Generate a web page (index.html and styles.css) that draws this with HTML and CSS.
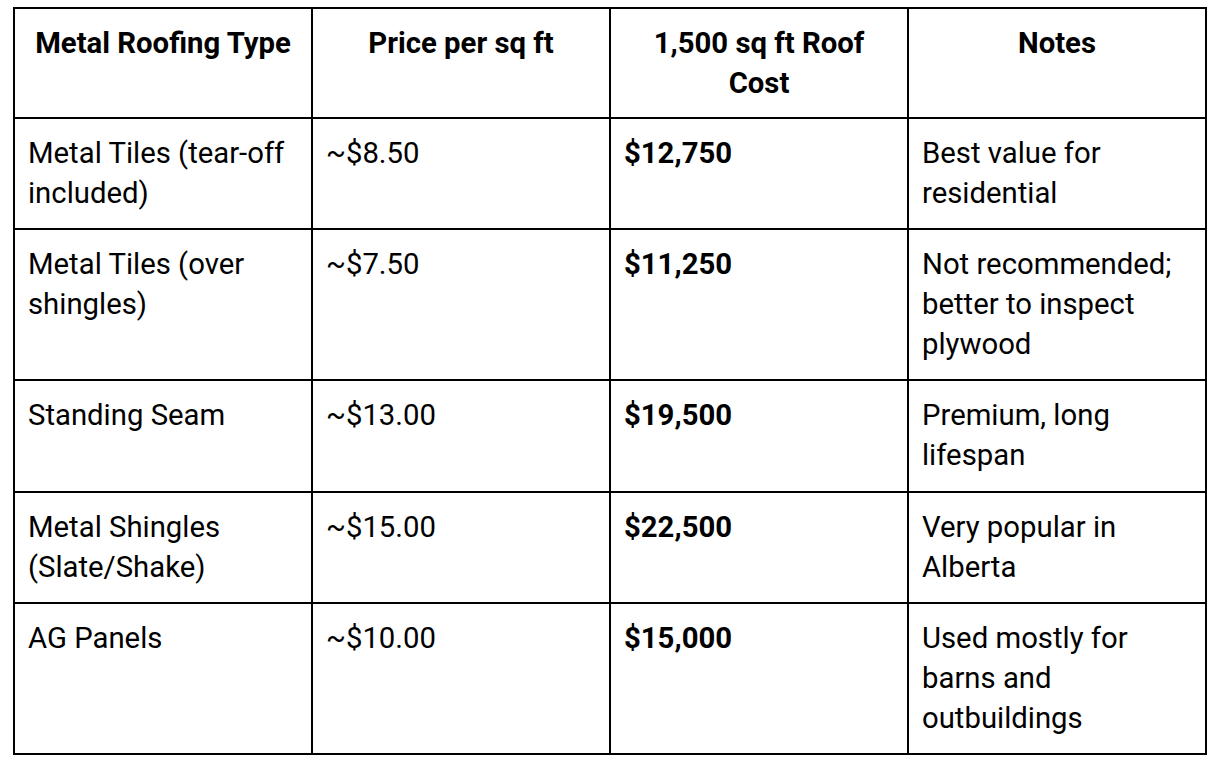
FILE: index.html
```html
<!DOCTYPE html>
<html>
<head>
<meta charset="utf-8">
<link rel="stylesheet" href="styles.css">
</head>
<body>
<table class="cost-table">
  <colgroup><col><col><col><col></colgroup>
  <thead>
    <tr><th>Metal Roofing Type</th><th>Price per sq ft</th><th>1,500 sq ft Roof Cost</th><th>Notes</th></tr>
  </thead>
  <tbody>
    <tr><td>Metal Tiles (tear-off included)</td><td>~$8.50</td><td><strong>$12,750</strong></td><td>Best value for residential</td></tr>
    <tr><td>Metal Tiles (over shingles)</td><td>~$7.50</td><td><strong>$11,250</strong></td><td>Not recommended; better to inspect plywood</td></tr>
    <tr><td>Standing Seam</td><td>~$13.00</td><td><strong>$19,500</strong></td><td>Premium, long lifespan</td></tr>
    <tr><td>Metal Shingles (Slate/Shake)</td><td>~$15.00</td><td><strong>$22,500</strong></td><td>Very popular in Alberta</td></tr>
    <tr><td>AG Panels</td><td>~$10.00</td><td><strong>$15,000</strong></td><td>Used mostly for barns and outbuildings</td></tr>
  </tbody>
</table>
</body>
</html>
```
FILE: styles.css
```css
html, body { margin: 0; padding: 0; background: #fff; }
body { padding: 7px 0 0 13px; font-family: Roboto, "Liberation Sans", sans-serif; color: #000; }
.cost-table {
  border-collapse: collapse;
  table-layout: fixed;
  width: 1194px;
  font-size: 29.3px;
  line-height: 40px;
}
.cost-table col { width: 25%; }
.cost-table th, .cost-table td {
  border: 2px solid #000;
  padding: 14px 13px;
  vertical-align: top;
  text-align: left;
}
.cost-table td { padding-bottom: 15.2px; }
.cost-table th { font-weight: 700; text-align: center; }
.cost-table strong { font-weight: 700; }
```
